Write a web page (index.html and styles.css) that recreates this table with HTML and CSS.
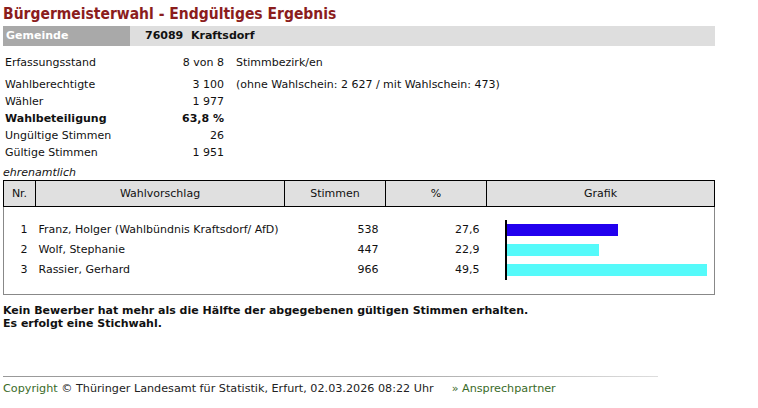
FILE: index.html
```html
<!DOCTYPE html>
<html lang="de">
<head>
<meta charset="utf-8">
<title>Bürgermeisterwahl - Endgültiges Ergebnis</title>
<link rel="stylesheet" href="styles.css">
</head>
<body>
<div class="page">
  <h1 class="title">Bürgermeisterwahl - Endgültiges Ergebnis</h1>
  <div class="gemeinde">
    <div class="g-label">Gemeinde</div>
    <div class="g-value">76089&nbsp; Kraftsdorf</div>
  </div>

  <div class="stats first">
    <div class="lbl">Erfassungsstand</div><div class="val">8 von 8</div><div class="ext">Stimmbezirk/en</div>
  </div>
  <div class="stats">
    <div class="lbl">Wahlberechtigte</div><div class="val">3 100</div><div class="ext">(ohne Wahlschein: 2 627 / mit Wahlschein: 473)</div>
    <div class="lbl">Wähler</div><div class="val">1 977</div><div class="ext"></div>
    <div class="lbl b">Wahlbeteiligung</div><div class="val b">63,8 %</div><div class="ext"></div>
    <div class="lbl">Ungültige Stimmen</div><div class="val">26</div><div class="ext"></div>
    <div class="lbl">Gültige Stimmen</div><div class="val">1 951</div><div class="ext"></div>
  </div>

  <div class="note">ehrenamtlich</div>

  <table class="result">
    <thead>
      <tr>
        <th class="c-nr">Nr.</th>
        <th class="c-name">Wahlvorschlag</th>
        <th class="c-st">Stimmen</th>
        <th class="c-pc">%</th>
        <th class="c-gr">Grafik</th>
      </tr>
    </thead>
    <tbody>
      <tr class="spacer"><td></td><td></td><td></td><td></td><td></td></tr>
      <tr>
        <td class="nr">1</td><td class="name">Franz, Holger (Wahlbündnis Kraftsdorf/ AfD)</td><td class="num">538</td><td class="pct">27,6</td>
        <td class="gr"><div class="axis"><div class="bar blue" style="width:111px"></div></div></td>
      </tr>
      <tr>
        <td class="nr">2</td><td class="name">Wolf, Stephanie</td><td class="num">447</td><td class="pct">22,9</td>
        <td class="gr"><div class="axis"><div class="bar cyan" style="width:92px"></div></div></td>
      </tr>
      <tr>
        <td class="nr">3</td><td class="name">Rassier, Gerhard</td><td class="num">966</td><td class="pct">49,5</td>
        <td class="gr"><div class="axis"><div class="bar cyan" style="width:200px"></div></div></td>
      </tr>
      <tr class="tail"><td></td><td></td><td></td><td></td><td></td></tr>
    </tbody>
  </table>

  <p class="message">Kein Bewerber hat mehr als die Hälfte der abgegebenen gültigen Stimmen erhalten.<br>Es erfolgt eine Stichwahl.</p>

  <div class="rule"></div>
  <div class="footer">
    <span><span class="green">Copyright</span> © Thüringer Landesamt für Statistik, Erfurt, 02.03.2026 08:22 Uhr</span>
    <span class="green link">» Ansprechpartner</span>
  </div>
</div>
</body>
</html>
```

FILE: styles.css
```css
html, body {
  margin: 0;
  padding: 0;
  background: #fff;
}
body {
  font-family: "DejaVu Sans", sans-serif;
  font-size: 11px;
  color: #111;
}
.page {
  padding: 5px 3px 0 3px;
  width: 712px;
}
.title {
  margin: 0;
  font-family: "DejaVu Sans Condensed", "DejaVu Sans", sans-serif;
  font-size: 15.5px;
  line-height: 18px;
  font-weight: bold;
  color: #8b1d1d;
}
.gemeinde {
  display: flex;
  margin-top: 3px;
  height: 20px;
  line-height: 20px;
  font-weight: bold;
  font-size: 11px;
}
.g-label {
  width: 127px;
  background: #a9a9a9;
  color: #fff;
  padding-left: 3px;
  box-sizing: border-box;
}
.g-value {
  flex: 1;
  background: #dedede;
  padding-left: 15px;
  color: #111;
}
.stats {
  display: grid;
  grid-template-columns: 144px 63px 1fr;
  column-gap: 12px;
  line-height: 17px;
  padding-left: 2px;
}
.stats.first {
  margin-top: 8px;
  margin-bottom: 5px;
}
.val { text-align: right; }
.b { font-weight: bold; }
.note {
  font-style: italic;
  line-height: 14px;
  margin-top: 5px;
}
.result {
  border-collapse: collapse;
  width: 712px;
  table-layout: fixed;
}
.result th {
  background: #e0e0e0;
  font-weight: normal;
  border: 1px solid #000;
  height: 25px;
  padding: 0;
  text-align: center;
}
.c-nr { width: 31px; }
.c-name { width: 248px; }
.c-st { width: 100px; }
.c-pc { width: 100px; }
.result tbody {
  border: 1px solid #888;
}
.result td {
  padding: 0;
  height: 20px;
  line-height: 20px;
}
.result tr.spacer td { height: 13px; line-height: 13px; }
.result tr.tail td { height: 14px; line-height: 14px; }
.nr { text-align: right; padding-right: 8px !important; }
.name { padding-left: 3px !important; white-space: nowrap; }
.num { text-align: right; padding-right: 7px !important; }
.pct { text-align: right; padding-right: 7px !important; }
.gr { padding-left: 18px !important; }
.axis {
  height: 20px;
  border-left: 2px solid #000;
  display: flex;
  align-items: center;
  box-sizing: border-box;
}
.bar { height: 12px; }
.blue { background: #2200ee; }
.cyan { background: #55fafa; }

.message {
  margin: 9px 0 0 0;
  font-weight: bold;
  line-height: 13px;
}
.rule {
  margin-top: 46px;
  height: 1px;
  width: 655px;
  background: linear-gradient(to right, #999 0%, #aaa 60%, #ddd 100%);
}
.footer {
  display: flex;
  gap: 18px;
  line-height: 23px;
  font-size: 11.2px;
  color: #222;
}
.green { color: #3a6b28; }
```
